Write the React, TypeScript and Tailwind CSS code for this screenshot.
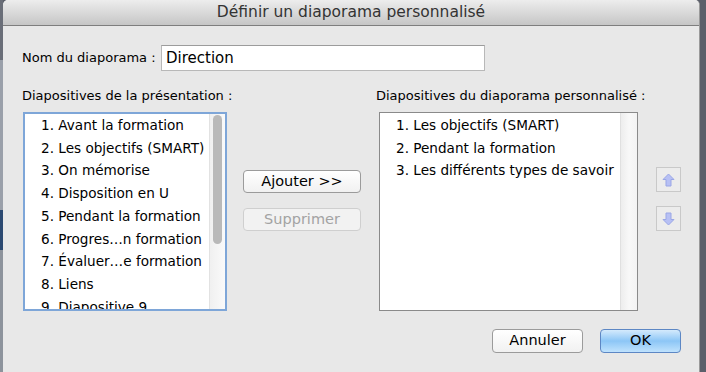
import React from "react";

const leftItems = [
  "1. Avant la formation",
  "2. Les objectifs (SMART)",
  "3. On mémorise",
  "4. Disposition en U",
  "5. Pendant la formation",
  "6. Progres…n formation",
  "7. Évaluer…e formation",
  "8. Liens",
  "9. Diapositive 9",
];

const rightItems = [
  "1. Les objectifs (SMART)",
  "2. Pendant la formation",
  "3. Les différents types de savoir",
];

function ArrowBtn({ down }: { down?: boolean }) {
  return (
    <div className="w-[25px] h-[25px] border border-[#c9c9c9] bg-[#ececec] flex items-center justify-center">
      <svg width="13" height="14" viewBox="0 0 13 14" className={down ? "rotate-180" : ""}>
        <path d="M6.5 1 L12 6.5 L9 6.5 L9 13 L4 13 L4 6.5 L1 6.5 Z" fill="#b7c0f4" stroke="#9aa6e6" strokeWidth="1" strokeLinejoin="round" />
      </svg>
    </div>
  );
}

export default function App() {
  return (
    <div className="w-[706px] h-[372px] flex bg-[#5b5f6a] overflow-hidden" style={{ fontFamily: '"DejaVu Sans", sans-serif' }}>
      {/* desktop sliver on the left */}
      <div className="w-[3px] flex flex-col">
        <div className="h-[60px] bg-[#6a6e78]" />
        <div className="h-[150px] bg-[#9aa0aa]" />
        <div className="h-[40px] bg-[#2c4a72]" />
        <div className="flex-1 bg-[#8d939c]" />
      </div>

      {/* window */}
      <div className="w-[697px] h-full flex flex-col bg-[#e8e8e8] rounded-t-[5px] overflow-hidden border-r border-[#9a9a9a]">
        <div className="h-[26px] shrink-0 flex items-center justify-center bg-gradient-to-b from-[#ededed] to-[#c6c6c6] border-b border-[#7e7e7e] text-[15.5px] text-[#333]">
          Définir un diaporama personnalisé
        </div>

        <div className="flex-1 flex flex-col pl-[19px] text-[13px] text-black">
          {/* name row */}
          <div className="flex items-center mt-[19px] h-[26px]">
            <span className="w-[139px]">Nom du diaporama :</span>
            <div className="w-[324px] h-[26px] bg-white border border-[#b8b8b8] border-t-[#9c9c9c] flex items-center pl-[4px] text-[15px]">
              Direction
            </div>
          </div>

          {/* lists */}
          <div className="flex mt-[17px] whitespace-nowrap">
            <div className="w-[205px] flex flex-col">
              <span className="h-[24px] leading-[16px]">Diapositives de la présentation :</span>
              <div className="ml-[1px] w-[204px] h-[199px] border-2 border-[#7ea6d8] bg-white flex overflow-hidden">
                <div className="flex-1 pl-[16px] text-[13.6px] leading-[22.7px] overflow-hidden">
                  {leftItems.map((t) => (
                    <div key={t}>{t}</div>
                  ))}
                </div>
                <div className="w-[16px] bg-gradient-to-r from-[#f0f0f0] to-[#fafafa] border-l border-[#e2e2e2] flex justify-center pt-[1px]">
                  <div className="w-[9px] h-[129px] rounded-full bg-[#b9b9b9]" />
                </div>
              </div>
            </div>

            <div className="w-[149px] flex flex-col pl-[16px] pt-[82px] gap-[15px]">
              <div className="w-[118px] h-[23px] rounded-[4px] border border-[#9b9b9b] bg-gradient-to-b from-white to-[#f1f1f1] flex items-center justify-center text-[14.5px]">
                Ajouter &gt;&gt;
              </div>
              <div className="w-[118px] h-[23px] rounded-[4px] border border-[#cfcfcf] bg-[#f2f2f2] flex items-center justify-center text-[14.5px] text-[#a3a3a3]">
                Supprimer
              </div>
            </div>

            <div className="w-[262px] flex flex-col">
              <span className="h-[24px] leading-[16px]">Diapositives du diaporama personnalisé :</span>
              <div className="ml-[3px] w-[259px] h-[199px] border border-[#8a8a8a] bg-white flex overflow-hidden">
                <div className="flex-1 pl-[16px] pt-[1px] text-[13.6px] leading-[22.7px]">
                  {rightItems.map((t) => (
                    <div key={t}>{t}</div>
                  ))}
                </div>
                <div className="w-[17px] bg-gradient-to-r from-[#ededed] via-[#f8f8f8] to-[#f3f3f3] border-l border-[#e0e0e0]" />
              </div>
            </div>

            <div className="flex flex-col pl-[18px] pt-[79px] gap-[14px]">
              <ArrowBtn />
              <ArrowBtn down />
            </div>
          </div>

          {/* bottom buttons */}
          <div className="flex mt-[18px] pl-[470px] gap-[17px]">
            <div className="w-[91px] h-[24px] rounded-[4px] border border-[#9b9b9b] bg-gradient-to-b from-white to-[#f1f1f1] flex items-center justify-center text-[14.5px]">
              Annuler
            </div>
            <div className="w-[81px] h-[24px] rounded-[4px] border border-[#5d87c4] bg-gradient-to-b from-[#d4eafc] via-[#8cc6f6] to-[#bfe2fd] flex items-center justify-center text-[14.5px]">
              OK
            </div>
          </div>
        </div>
      </div>

      <div className="flex-1 bg-[#5b5f6a]" />
    </div>
  );
}
